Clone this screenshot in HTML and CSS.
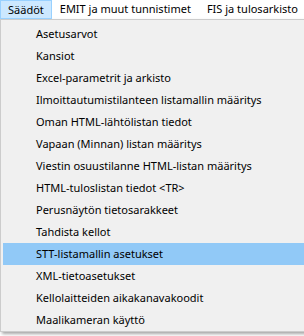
FILE: index.html
```html
<!DOCTYPE html>
<html lang="fi">
<head>
  <meta charset="UTF-8">
  <title>Säädöt</title>
  <link rel="stylesheet" href="styles.css">
</head>
<body>
  <div class="menubar">
    <span class="menu-title active">Säädöt</span>
    <span class="menu-title">EMIT ja muut tunnistimet</span>
    <span class="menu-title">FIS ja tulosarkisto</span>
  </div>
  <ul class="dropdown">
    <li class="item">Asetusarvot</li>
    <li class="item">Kansiot</li>
    <li class="item">Excel-parametrit ja arkisto</li>
    <li class="item">Ilmoittautumistilanteen listamallin määritys</li>
    <li class="item">Oman HTML-lähtölistan tiedot</li>
    <li class="item">Vapaan (Minnan) listan määritys</li>
    <li class="item">Viestin osuustilanne HTML-listan määritys</li>
    <li class="item">HTML-tuloslistan tiedot &lt;TR&gt;</li>
    <li class="item">Perusnäytön tietosarakkeet</li>
    <li class="item">Tahdista kellot</li>
    <li class="item selected">STT-listamallin asetukset</li>
    <li class="item">XML-tietoasetukset</li>
    <li class="item">Kellolaitteiden aikakanavakoodit</li>
    <li class="item">Maalikameran käyttö</li>
  </ul>
</body>
</html>
```

FILE: styles.css
```css
body {
  margin: 0;
  background: #fff;
  font-family: 'Noto Sans', sans-serif;
  font-size: 11px;
  color: #000;
  width: 304px;
  height: 336px;
  overflow: hidden;
}
.menubar {
  display: flex;
  height: 19px;
  background: #fff;
}
.menu-title {
  padding: 0 7px;
  line-height: 18px;
  border: 1px solid transparent;
  border-top: none;
  white-space: nowrap;
}
.menu-title.active {
  background: #cce8ff;
  border-color: #99d1ff;
  border-top: 1px solid #99d1ff;
  line-height: 17px;
}
.dropdown {
  list-style: none;
  margin: 0;
  padding: 3px 0 0 0;
  width: 330px;
  background: #f0f0f0;
  border: 1px solid #cccccc;
  box-shadow: 2px 2px 3px rgba(0, 0, 0, 0.35);
}
.item {
  height: 22px;
  line-height: 22px;
  padding-left: 33px;
  margin-left: 2px;
  white-space: nowrap;
}
.item.selected {
  background: #91c9f7;
}
```
